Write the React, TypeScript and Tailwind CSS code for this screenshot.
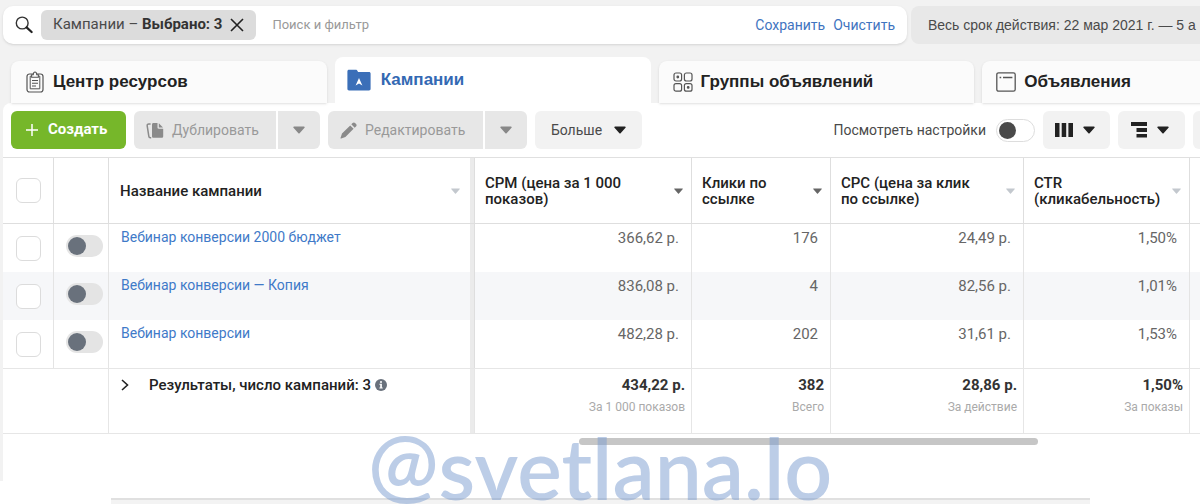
import { ReactNode } from "react";

interface Campaign {
  id: number;
  name: string;
  cpm: string;
  clicks: string;
  cpc: string;
  ctr: string;
}

const campaigns: Campaign[] = [
  {
    id: 1,
    name: "Вебинар конверсии 2000 бюджет",
    cpm: "366,62 р.",
    clicks: "176",
    cpc: "24,49 р.",
    ctr: "1,50%",
  },
  {
    id: 2,
    name: "Вебинар конверсии — Копия",
    cpm: "836,08 р.",
    clicks: "4",
    cpc: "82,56 р.",
    ctr: "1,01%",
  },
  {
    id: 3,
    name: "Вебинар конверсии",
    cpm: "482,28 р.",
    clicks: "202",
    cpc: "31,61 р.",
    ctr: "1,53%",
  },
];

const totals = [
  { value: "434,22 р.", label: "За 1 000 показов" },
  { value: "382", label: "Всего" },
  { value: "28,86 р.", label: "За действие" },
  { value: "1,50%", label: "За показы" },
];

const columns = [
  { title: "CPM (цена за 1 000 показов)", active: true },
  { title: "Клики по ссылке", active: true },
  { title: "CPC (цена за клик по ссылке)", active: false },
  { title: "CTR (кликабельность)", active: false },
];

function Caret({ className }: { className: string }) {
  return (
    <svg viewBox="0 0 12 8" className={className} fill="currentColor">
      <path d="M1 .5h10a.7.7 0 0 1 .5 1.2L6.6 7.2a.8.8 0 0 1-1.2 0L.5 1.7A.7.7 0 0 1 1 .5z" />
    </svg>
  );
}

function SearchIcon() {
  return (
    <svg viewBox="0 0 18 18" className="size-[18px] shrink-0" fill="none">
      <circle cx="7.2" cy="7" r="5.9" stroke="#333" strokeWidth="1.4" />
      <path d="M11.6 11.4l5 4.6" stroke="#222" strokeWidth="2.2" strokeLinecap="round" />
    </svg>
  );
}

function ClipboardIcon() {
  return (
    <svg viewBox="0 0 18 22" className="h-[22px] w-[18px]" fill="none" stroke="#555">
      <rect x="1" y="3" width="16" height="18" rx="2.5" strokeWidth="1.2" />
      <path d="M5 5.2H4.2v12.6h9.6V5.2H13" strokeWidth="1" />
      <path d="M5.6 6.2V3.8h1.6C7.4 2 8 1 9 1s1.600 1 1.800 2.800h1.600v2.400z" strokeWidth="1.1" fill="#fbfbfb" />
      <path d="M6 9.500h6M6 12.200h6M6 15h4" strokeWidth="1.1" />
    </svg>
  );
}

function FolderIcon() {
  return (
    <svg viewBox="0 0 24 22" className="h-[22px] w-6">
      <path
        d="M2 .8h6.800c.8 0 1.300.5 1.700 1.200l.6 1H22c1 0 1.600.7 1.600 1.600v15.200c0 1-.6 1.600-1.600 1.600H2c-1 0-1.600-.6-1.600-1.600V2.400C.4 1.400 1 .8 2 .8z"
        fill="#3b6fb8"
      />
      <path d="M12 9l3.400 7.400L12 14.600l-3.400 1.800z" fill="#fff" />
    </svg>
  );
}

function GroupsIcon() {
  return (
    <svg viewBox="0 0 20 20" className="size-5" fill="none" stroke="#555" strokeWidth="1.2">
      <rect x="1" y="1" width="7.600" height="8" rx="2" />
      <rect x="11.400" y="1" width="7.600" height="8" rx="2" />
      <rect x="1" y="11.600" width="7.600" height="7.600" rx="2" />
      <rect x="11.400" y="11.600" width="7.600" height="7.600" rx="2" />
      <circle cx="4.800" cy="5" r=".8" fill="#333" />
      <circle cx="15.200" cy="15.400" r=".8" fill="#333" />
    </svg>
  );
}

function AdsIcon() {
  return (
    <svg viewBox="0 0 20 20" className="size-5" fill="none" stroke="#555">
      <rect x=".8" y=".8" width="18.400" height="18.400" rx="1.800" strokeWidth="1.300" />
      <path d="M3.600 5.500h1.600M7 5.500h9.400" strokeWidth="1.300" />
    </svg>
  );
}

function DuplicateIcon() {
  return (
    <svg viewBox="0 0 18 17" className="h-[17px] w-[18px]">
      <path d="M4.600 2H2.800C1.600 2 1 2.700 1.200 3.800l1.600 10.400c.1 1 .7 1.500 1.600 1.500h.8" fill="none" stroke="#8a8a8a" strokeWidth="1.500" />
      <path d="M7.500 1h4v4.500c0 .8.400 1.200 1.200 1.200h4.500v7.500c0 1-.6 1.600-1.600 1.600H7.500c-1 0-1.500-.6-1.500-1.600V2.600C6 1.600 6.500 1 7.500 1z" fill="#8a8a8a" />
      <path d="M12.800 1.200l4.200 4.200h-4.200z" fill="#8a8a8a" />
    </svg>
  );
}

function PencilIcon() {
  return (
    <svg viewBox="0 0 17 17" className="size-[17px]" fill="#8a8a8a">
      <path d="M10.200 3.400l3.400 3.400-8.200 8.200-4.200 1.600c-.5.1-.8-.2-.7-.7L2 11.600zM11.300 2.300l1.300-1.300c.8-.8 1.700-.8 2.500 0l.9.9c.8.800.8 1.700 0 2.500l-1.300 1.300z" />
    </svg>
  );
}

interface TabProps {
  icon: ReactNode;
  label: string;
  active?: boolean;
}

function Tab({ icon, label, active }: TabProps) {
  return (
    <button
      type="button"
      role="tab"
      aria-selected={!!active}
      className={
        active
          ? "flex h-[46px] flex-1 items-center gap-[10px] rounded-t-lg bg-white px-3 text-[#3369b3]"
          : "flex h-[42px] flex-1 items-center gap-[6px] rounded-t-lg bg-[#fbfbfb] px-3 text-[#222] shadow-sm"
      }
    >
      <span className="flex w-6 shrink-0 justify-center">{icon}</span>
      {label}
    </button>
  );
}

function Toggle({ label }: { label: string }) {
  return (
    <input
      type="checkbox"
      role="switch"
      aria-label={label}
      className="block h-[22px] w-[37px] appearance-none rounded-full bg-[#e4e4e4] p-[2px] before:block before:size-[18px] before:rounded-full before:bg-[#69717c]"
    />
  );
}

function Checkbox({ label }: { label: string }) {
  return (
    <input
      type="checkbox"
      aria-label={label}
      className="mx-auto block size-[25px] appearance-none rounded-md border border-[#dcdcdc] bg-white"
    />
  );
}

export default function App() {
  return (
    <div className="relative overflow-hidden bg-white font-[Roboto,sans-serif] text-sm text-[#4a4a4a]">
      <div className="bg-[#f2f2f2] pt-[6px] pl-[3px]">
        <div className="flex gap-1">
          <div className="flex h-[38px] flex-1 items-center rounded-[10px] bg-white pr-3 pl-3 shadow-sm">
            <SearchIcon />
            <div className="ml-2 flex h-[30px] shrink-0 items-center rounded-md bg-[#dcdcdc] px-3 text-[15px]">
              <span>
                Кампании – <b className="text-[#333]">Выбрано: 3</b>
              </span>
              <button type="button" aria-label="Удалить фильтр" className="ml-2">
                <svg viewBox="0 0 14 14" className="size-[14px]" stroke="#222" strokeWidth="1.600">
                  <path d="M1 1l12 12M13 1L1 13" />
                </svg>
              </button>
            </div>
            <input
              type="text"
              aria-label="Поиск и фильтр"
              placeholder="Поиск и фильтр"
              className="ml-4 min-w-0 flex-1 text-[13px] outline-none placeholder:text-[#999]"
            />
            <div className="flex shrink-0 gap-2 text-[#3f74c0]">
              <a href="#save">Сохранить</a>
              <a href="#clear">Очистить</a>
            </div>
          </div>
          <button
            type="button"
            className="-mr-5 h-[38px] w-[309px] shrink-0 overflow-hidden rounded-lg bg-[#e8e8e8] pl-[17px] text-left font-['Liberation_Sans',Arial,sans-serif] whitespace-nowrap"
          >
            Весь срок действия: 22 мар 2021 г. — 5 а
          </button>
        </div>

        <div
          role="tablist"
          className="mt-[13px] -mr-[98px] flex items-end gap-2 pl-2 font-['Liberation_Sans',Arial,sans-serif] text-[17px] font-bold"
        >
          <Tab icon={<ClipboardIcon />} label="Центр ресурсов" />
          <Tab icon={<FolderIcon />} label="Кампании" active />
          <Tab icon={<GroupsIcon />} label="Группы объявлений" />
          <Tab icon={<AdsIcon />} label="Объявления" />
        </div>

        <div className="rounded-tl-lg bg-white">
          <div className="-mr-[60px] flex h-[54px] items-center gap-2 pl-2">
            <button
              type="button"
              className="flex h-[38px] w-[115px] items-center gap-[10px] rounded-md bg-[#76b72a] px-[15px] text-[15px] font-bold text-white"
            >
              <svg viewBox="0 0 12 12" className="size-3 shrink-0" stroke="currentColor" strokeWidth="1.500">
                <path d="M6 0v12M0 6h12" />
              </svg>
              Создать
            </button>
            <div className="flex gap-[2px] text-[#999]">
              <button
                type="button"
                className="flex h-[38px] w-[142px] items-center gap-2 rounded-l-md bg-[#e7e7e7] px-3"
              >
                <DuplicateIcon />
                Дублировать
              </button>
              <button
                type="button"
                aria-label="Варианты дублирования"
                className="flex h-[38px] w-[42px] items-center justify-center rounded-r-md bg-[#e7e7e7]"
              >
                <Caret className="h-2 w-3 text-[#888]" />
              </button>
            </div>
            <div className="flex gap-[2px] text-[#999]">
              <button
                type="button"
                className="flex h-[38px] w-[155px] items-center gap-2 rounded-l-md bg-[#e7e7e7] px-3"
              >
                <PencilIcon />
                Редактировать
              </button>
              <button
                type="button"
                aria-label="Варианты редактирования"
                className="flex h-[38px] w-[42px] items-center justify-center rounded-r-md bg-[#e7e7e7]"
              >
                <Caret className="h-2 w-3 text-[#888]" />
              </button>
            </div>
            <button
              type="button"
              className="flex h-[38px] w-[107px] items-center justify-center gap-3 rounded-md bg-[#f2f2f2]"
            >
              Больше
              <Caret className="h-2 w-3 text-[#222]" />
            </button>
            <label className="ml-auto flex items-center gap-[10px]">
              Посмотреть настройки
              <input
                type="checkbox"
                role="switch"
                className="block h-[23px] w-[39px] appearance-none rounded-full border border-[#ddd] bg-white p-[2px] before:block before:size-[17px] before:rounded-full before:bg-[#4a4a4a]"
              />
            </label>
            <button
              type="button"
              aria-label="Столбцы"
              className="flex h-[38px] w-[67px] items-center gap-[10px] rounded-md bg-[#f2f2f2] pl-3 text-[#222]"
            >
              <svg viewBox="0 0 18 14" className="h-[14px] w-[18px]" fill="currentColor">
                <path d="M0 0h4.500v14H0zM6.700 0h4.500v14H6.700zM13.400 0H18v14h-4.600z" />
              </svg>
              <Caret className="h-2 w-3" />
            </button>
            <button
              type="button"
              aria-label="Разбивка"
              className="flex h-[38px] w-[67px] items-center gap-[10px] rounded-md bg-[#f2f2f2] pl-[13px] text-[#222]"
            >
              <svg viewBox="0 0 16 16" className="size-4" fill="currentColor">
                <path d="M0 0h16v4H0zM5.500 6H16v4H5.500zM5.500 12H16v3.600H5.500z" />
              </svg>
              <Caret className="h-2 w-3" />
            </button>
            <button type="button" aria-label="Отчеты" className="h-[38px] w-[67px] rounded-md bg-[#f2f2f2]" />
          </div>

          <table className="w-full table-fixed border-separate border-spacing-0 border-t border-[#e0e0e0] text-[15px]">
            <colgroup>
              <col className="w-[51px]" />
              <col className="w-[55px]" />
              <col />
              <col className="w-[217px]" />
              <col className="w-[139px]" />
              <col className="w-[193px]" />
              <col className="w-[166px]" />
              <col className="w-[10px]" />
            </colgroup>
            <thead>
              <tr className="h-[66px] text-left leading-4 text-[#222]">
                <th className="border-r border-b border-[#dedede]">
                  <Checkbox label="Выбрать все" />
                </th>
                <th className="border-r border-b border-[#dedede]" />
                <th className="border-r border-b border-[#dedede] pr-[14px] pl-[11px] shadow-[inset_-4px_0_0_#ebebeb]">
                  <div className="flex items-center justify-between font-medium">
                    Название кампании
                    <Caret className="h-[6px] w-[9px] text-[#c3c8ce]" />
                  </div>
                </th>
                {columns.map((column) => (
                  <th key={column.title} className="border-r border-b border-[#dedede] pr-2 pl-[10px]">
                    <div className="flex items-center justify-between font-medium">
                      <span className="max-w-[140px]">{column.title}</span>
                      <Caret
                        className={
                          column.active
                            ? "h-[6px] w-[9px] shrink-0 text-[#666]"
                            : "h-[6px] w-[9px] shrink-0 text-[#c3c8ce]"
                        }
                      />
                    </div>
                  </th>
                ))}
                <th className="border-b border-[#dedede]" />
              </tr>
            </thead>
            <tbody>
              {campaigns.map((row) => (
                <tr key={row.id} className="h-12 align-top leading-5 text-[#666] even:bg-[#f6f7f9]">
                  <td className="border-r border-[#e4e4e4] pt-3">
                    <Checkbox label={row.name} />
                  </td>
                  <td className="border-r border-[#e4e4e4] pt-[11px] pl-3">
                    <Toggle label={row.name} />
                  </td>
                  <td className="border-r border-[#dedede] pt-[3px] pl-3 shadow-[inset_-4px_0_0_#ebebeb]">
                    <a href="#campaign" className="text-sm text-[#3f7ac8]">
                      {row.name}
                    </a>
                  </td>
                  <td className="border-r border-[#e4e4e4] pt-1 pr-3 text-right">{row.cpm}</td>
                  <td className="border-r border-[#e4e4e4] pt-1 pr-3 text-right">{row.clicks}</td>
                  <td className="border-r border-[#e4e4e4] pt-1 pr-3 text-right">{row.cpc}</td>
                  <td className="border-r border-[#e4e4e4] pt-1 pr-3 text-right">{row.ctr}</td>
                  <td />
                </tr>
              ))}
            </tbody>
            <tfoot>
              <tr className="h-[66px] align-top">
                <td colSpan={2} className="border-y border-r border-[#e6e6e6]" />
                <td className="border-y border-r border-[#e6e6e6] pt-[6px] pl-3 shadow-[inset_-4px_0_0_#ebebeb]">
                  <div className="flex items-center leading-5 font-medium text-[#222]">
                    <button type="button" aria-label="Развернуть" className="mr-5">
                      <svg viewBox="0 0 8 12" className="h-3 w-2" fill="none" stroke="#222" strokeWidth="1.600">
                        <path d="M1 1l5.500 5L1 11" />
                      </svg>
                    </button>
                    Результаты, число кампаний: 3
                    <svg viewBox="0 0 12 12" className="ml-1 size-3">
                      <circle cx="6" cy="6" r="6" fill="#69717c" />
                      <path d="M5 2.200h2v1.600H5zM4.400 4.800h2.500v3.700h.8v1H4.400v-1h.8V5.800h-.8z" fill="#fff" />
                    </svg>
                  </div>
                </td>
                {totals.map((total) => (
                  <td key={total.label} className="border-y border-r border-[#e6e6e6] pt-[6px] pr-[6px] text-right">
                    <div className="leading-5 font-bold text-[#333]">{total.value}</div>
                    <div className="text-xs leading-6 text-[#aaa]">{total.label}</div>
                  </td>
                ))}
                <td className="border-y border-[#e6e6e6]" />
              </tr>
            </tfoot>
          </table>

          <div className="pt-1 pb-9">
            <div className="mr-[162px] ml-[576px] h-[7px] rounded-full bg-[#c6c6c6]" />
          </div>
        </div>
      </div>

      <div className="mt-[17px] mr-[110px] ml-[111px] h-[6px] border-t-2 border-[#e0e0e0] bg-[#f3f3f3]" />

      <div className="pointer-events-none absolute bottom-0 left-[368px] font-[Lato,sans-serif] text-[84px] leading-[72px] font-semibold whitespace-nowrap text-[#7a9cd0]/50">
        <span className="align-[6px]">@</span>svetlana.lo
      </div>
    </div>
  );
}
